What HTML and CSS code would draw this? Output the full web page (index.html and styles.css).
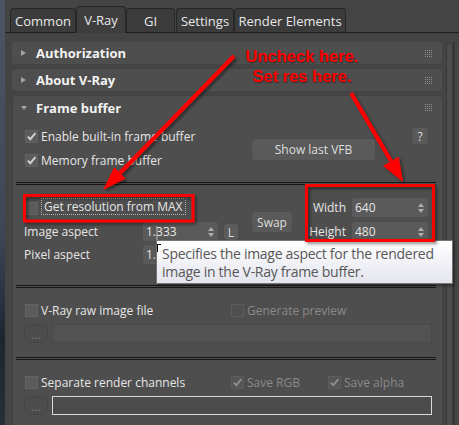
FILE: index.html
```html
<!DOCTYPE html>
<html lang="en">
<head>
<meta charset="utf-8">
<title>Render Setup - V-Ray</title>
<link rel="stylesheet" href="styles.css">
</head>
<body>
<div class="window">
  <div class="edge"></div>
  <div class="main">
    <div class="tabs">
      <div class="tab w-common">Common</div>
      <div class="tab active w-vray">V-Ray</div>
      <div class="tab w-gi">GI</div>
      <div class="tab w-settings">Settings</div>
      <div class="tab w-elements">Render Elements</div>
    </div>
    <div class="body">
      <div class="rollouts">
        <div class="rollout">
          <div class="rhead"><span class="tri right"></span><span class="rtitle">Authorization</span><span class="grip"></span></div>
        </div>
        <div class="rollout">
          <div class="rhead"><span class="tri right"></span><span class="rtitle">About V-Ray</span><span class="grip"></span></div>
        </div>
        <div class="rollout open">
          <div class="rhead"><span class="tri down"></span><span class="rtitle">Frame buffer</span><span class="grip"></span></div>

          <div class="fb-top">
            <div class="checks">
              <label class="check"><span class="box on"><svg viewBox="0 0 11 11"><path d="M1.8 5.6 L4.3 8.2 L9.4 2.2"/></svg></span><span>Enable built-in frame buffer</span></label>
              <label class="check"><span class="box on"><svg viewBox="0 0 11 11"><path d="M1.8 5.6 L4.3 8.2 L9.4 2.2"/></svg></span><span>Memory frame buffer</span></label>
            </div>
            <button class="btn vfb">Show last VFB</button>
            <button class="btn help">?</button>
          </div>

          <div class="sep"></div>

          <div class="res">
            <div class="res-left">
              <label class="check span-all"><span class="box"></span><span class="focus">Get resolution from MAX</span></label>
              <span class="lbl">Image aspect</span>
              <span class="spin"><span class="val">1.333</span><span class="arrows"><i class="up"></i><i class="dn"></i></span></span>
              <button class="btn lock">L</button>
              <span class="lbl">Pixel aspect</span>
              <span class="spin"><span class="val">1.0</span><span class="arrows"><i class="up"></i><i class="dn"></i></span></span>
            </div>
            <button class="btn swap">Swap</button>
            <div class="res-right">
              <span class="lbl">Width</span>
              <span class="spin"><span class="val">640</span><span class="arrows"><i class="up"></i><i class="dn"></i></span></span>
              <span class="lbl">Height</span>
              <span class="spin"><span class="val">480</span><span class="arrows"><i class="up"></i><i class="dn"></i></span></span>
            </div>
          </div>

          <div class="sep"></div>

          <div class="file-block">
            <div class="opts">
              <label class="check"><span class="box"></span><span>V-Ray raw image file</span></label>
              <label class="check off"><span class="box"></span><span>Generate preview</span></label>
            </div>
            <div class="path">
              <button class="dots">...</button>
              <div class="field"></div>
            </div>
          </div>

          <div class="sep"></div>

          <div class="file-block">
            <div class="opts">
              <label class="check"><span class="box"></span><span>Separate render channels</span></label>
              <label class="check off"><span class="box on"><svg viewBox="0 0 11 11"><path d="M1.8 5.6 L4.3 8.2 L9.4 2.2"/></svg></span><span>Save RGB</span></label>
              <label class="check off"><span class="box on"><svg viewBox="0 0 11 11"><path d="M1.8 5.6 L4.3 8.2 L9.4 2.2"/></svg></span><span>Save alpha</span></label>
            </div>
            <div class="path">
              <button class="dots">...</button>
              <div class="field active"></div>
            </div>
          </div>
        </div>
      </div>
      <div class="scroll"></div>
      <div class="rail"></div>
    </div>
  </div>
</div>

<!-- hover tooltip for the image aspect spinner -->
<div class="tooltip">Specifies the image aspect for the rendered<br>image in the V-Ray frame buffer.</div>
<svg class="cursor" width="8" height="28" viewBox="0 0 8 28">
  <path d="M2 0 V14" stroke="#b8b8b8" stroke-width="1"/>
  <path d="M2.5 18 V26 M2.5 18.5 H6" stroke="#000" stroke-width="1"/>
</svg>

<!-- red markup notes -->
<div class="note">Uncheck here.<br>Set res here.</div>
<svg class="marks" width="459" height="425" viewBox="0 0 459 425">
  <defs>
    <filter id="shade" x="-20%" y="-20%" width="140%" height="140%">
      <feDropShadow dx="2" dy="2" stdDeviation="1.5" flood-color="#000" flood-opacity="0.45"/>
    </filter>
  </defs>
  <g filter="url(#shade)">
    <rect x="24.5" y="195.5" width="168.5" height="25.5" fill="none" stroke="#ff0000" stroke-width="3"/>
    <rect x="306.5" y="185.5" width="127" height="55" fill="none" stroke="#ff0000" stroke-width="3"/>
    <line x1="234" y1="56" x2="120" y2="173" stroke="#ff0000" stroke-width="4"/>
    <polygon points="103,190 125.6,178.5 114.2,167.3" fill="#ff0000"/>
    <line x1="351" y1="93" x2="391" y2="161" stroke="#ff0000" stroke-width="4"/>
    <polygon points="403,182 398.7,156.8 383.1,165.8" fill="#ff0000"/>
  </g>
</svg>
</body>
</html>
```

FILE: styles.css
```css
* { box-sizing: border-box; }

html, body {
  margin: 0;
  padding: 0;
}

body {
  position: relative;
  width: 459px;
  height: 425px;
  overflow: hidden;
  background: #444444;
  font-family: "Open Sans", "Noto Sans", sans-serif;
  font-size: 12px;
  color: #e6e6e6;
}

button {
  font-family: inherit;
  font-size: inherit;
  padding: 0;
}

.window {
  display: flex;
  height: 425px;
}

/* desktop sliver at the left edge */
.edge {
  flex: none;
  width: 5px;
  background: linear-gradient(to bottom, #4c5663 0%, #3d4856 55%, #1c2631 80%, #26303b 100%);
}

.main {
  flex: 1;
  min-width: 0;
  display: flex;
  flex-direction: column;
}

/* ---------- tab strip ---------- */
.tabs {
  flex: none;
  height: 33px;
  display: flex;
  align-items: flex-end;
  padding-left: 5px;
  border-bottom: 1px solid #1f1f1f;
}

.tab {
  height: 24px;
  display: flex;
  align-items: center;
  justify-content: center;
  background: #3b3b3b;
  border: 1px solid #272727;
  border-bottom: none;
  border-radius: 4px 4px 0 0;
  color: #e8e8e8;
  font-size: 13px;
}

.tab.active {
  position: relative;
  height: 27px;
  margin-bottom: -1px;
  background: #3e3e3e;
}

.w-common { width: 66px; }
.w-vray { width: 50px; }
.w-gi { width: 49px; }
.w-settings { width: 58px; margin-left: 1px; }
.w-elements { width: 112px; }

/* ---------- rollout column ---------- */
.body {
  flex: 1;
  display: flex;
  padding-top: 9px;
  min-height: 0;
}

.rollouts {
  flex: none;
  width: 430px;
  margin-left: 7px;
  display: flex;
  flex-direction: column;
  gap: 5px;
}

.scroll {
  flex: none;
  width: 7px;
  margin-left: 4px;
  margin-top: 1px;
  background: #4d4d4d;
  border: 1px solid #393939;
  border-bottom: none;
  border-radius: 4px 4px 0 0;
}

.rail {
  flex: none;
  width: 6px;
  border-left: 2px solid #373737;
  background: #464646;
}

.rollout {
  flex: none;
  background: #4e4e4e;
  border-radius: 4px;
}

.rollout.open {
  flex: 1;
  border-radius: 4px 4px 0 0;
  box-shadow: inset 1px 0 0 #414141;
}

.rhead {
  height: 22px;
  display: flex;
  align-items: center;
  padding-left: 9px;
  color: #f2f2f2;
  font-weight: 700;
  font-size: 13px;
}

.open > .rhead { height: 23px; }

.tri {
  flex: none;
  width: 0;
  height: 0;
}

.tri.right {
  border-left: 5px solid #a3a3a3;
  border-top: 3px solid transparent;
  border-bottom: 3px solid transparent;
  margin-right: 10px;
}

.tri.down {
  border-top: 4px solid #a3a3a3;
  border-left: 3px solid transparent;
  border-right: 3px solid transparent;
  margin-right: 9px;
}

.grip {
  width: 7px;
  height: 7px;
  margin-left: auto;
  margin-right: 10px;
  background: repeating-linear-gradient(to right, #8e8e8e 0 1px, transparent 1px 2px);
  -webkit-mask: repeating-linear-gradient(to bottom, #000 0 1px, transparent 1px 2px);
  mask: repeating-linear-gradient(to bottom, #000 0 1px, transparent 1px 2px);
}

/* ---------- checkboxes ---------- */
.check {
  height: 20px;
  display: flex;
  align-items: center;
  white-space: nowrap;
}

.box {
  flex: none;
  width: 13px;
  height: 13px;
  margin-right: 3px;
  background: #5b5b5b;
  border: 1px solid #636363;
  display: flex;
}

.box svg {
  width: 11px;
  height: 11px;
}

.box svg path {
  fill: none;
  stroke: #d2d2d2;
  stroke-width: 2;
}

.check.off { color: #8a8a8a; }
.check.off .box { background: #4f4f4f; border-color: #5c5c5c; }
.check.off .box.on { background: #555555; }
.check.off .box svg path { stroke: #8c8c8c; }

/* ---------- buttons and spinners ---------- */
.btn {
  background: #5a5a5a;
  border: 1px solid #4c4c4c;
  border-radius: 4px;
  color: #dedede;
}

.spin {
  display: flex;
  align-items: center;
  height: 19px;
  padding-left: 3px;
  background: #5a5a5a;
  border-radius: 3px;
  color: #e6e6e6;
}

.arrows {
  margin-left: auto;
  margin-right: 4px;
  display: flex;
  flex-direction: column;
  gap: 2px;
}

.arrows i {
  display: block;
  width: 0;
  height: 0;
  border-left: 3px solid transparent;
  border-right: 3px solid transparent;
}

.arrows .up { border-bottom: 4px solid #ababab; }
.arrows .dn { border-top: 4px solid #ababab; }

/* ---------- frame buffer: top block ---------- */
.fb-top {
  height: 63px;
  display: flex;
  align-items: flex-start;
  padding-left: 13px;
}

.checks {
  width: 226px;
  padding-top: 7px;
  display: flex;
  flex-direction: column;
  gap: 4px;
}

.vfb {
  width: 125px;
  height: 23px;
  margin-top: 19px;
}

.help {
  width: 18px;
  height: 18px;
  margin-top: 8px;
  margin-left: 35px;
}

.sep {
  height: 3px;
  margin: 0 6px 0 4px;
  border-top: 1px solid #171717;
  border-bottom: 1px solid #171717;
}

/* ---------- resolution block ---------- */
.res {
  height: 100px;
  display: flex;
  align-items: flex-start;
  padding-top: 13px;
  padding-left: 12px;
}

.res-left {
  display: grid;
  grid-template-columns: 119px 75px 21px;
  grid-template-rows: 20px 19px 19px;
  row-gap: 4px;
  align-items: center;
}

.span-all {
  grid-column: 1 / -1;
  margin-left: 1px;
}

.focus {
  padding: 0 2px;
  height: 17px;
  line-height: 16px;
  border: 1px dotted #b4b4b4;
  margin-top: -3px;
}

.lbl { white-space: nowrap; }

.lock {
  width: 16px;
  height: 18px;
  margin-left: 5px;
  background: #5c5c5c;
}

.swap {
  width: 42px;
  height: 22px;
  margin-left: 12px;
  margin-top: 13px;
}

.res-right {
  margin-left: auto;
  margin-right: 14px;
  display: grid;
  grid-template-columns: auto 76px;
  grid-auto-rows: 19px;
  column-gap: 6px;
  row-gap: 5px;
  align-items: center;
}

.res-right .lbl { justify-self: end; }

/* ---------- file output blocks ---------- */
.file-block {
  height: 69px;
  padding-top: 12px;
}

.opts {
  display: grid;
  grid-template-columns: 206px 97px auto;
  padding-left: 13px;
}

.path {
  display: flex;
  gap: 4px;
  margin-top: 4px;
  padding-left: 12px;
}

.dots {
  width: 24px;
  height: 19px;
  background: #4c4c4c;
  border: 1px solid #464646;
  border-radius: 4px;
  color: #777777;
  line-height: 20px;
}

.field {
  width: 380px;
  height: 19px;
  background: #525252;
  border: 1px solid #484848;
}

.field.active {
  background: #4b4b4b;
  border-color: #d9d9d9;
}

/* ---------- overlays ---------- */
.tooltip {
  position: absolute;
  left: 156px;
  top: 240px;
  width: 297px;
  height: 44px;
  padding: 4px 0 0 5px;
  background: linear-gradient(to bottom, #ffffff, #e4e5ee);
  border: 1px solid #767676;
  box-shadow: 1px 2px 3px rgba(0, 0, 0, 0.35);
  color: #575757;
  font-size: 14px;
  letter-spacing: -0.28px;
  line-height: 18px;
  white-space: nowrap;
}

.cursor {
  position: absolute;
  left: 155px;
  top: 226px;
}

.note {
  position: absolute;
  left: 232px;
  top: 46px;
  width: 140px;
  text-align: center;
  font-family: "Liberation Sans", Arial, sans-serif;
  font-weight: 700;
  font-size: 16.5px;
  line-height: 20px;
  color: #ff0000;
  text-shadow: 1px 1px 1px rgba(0, 0, 0, 0.45);
}

.marks {
  position: absolute;
  left: 0;
  top: 0;
  pointer-events: none;
}
```
